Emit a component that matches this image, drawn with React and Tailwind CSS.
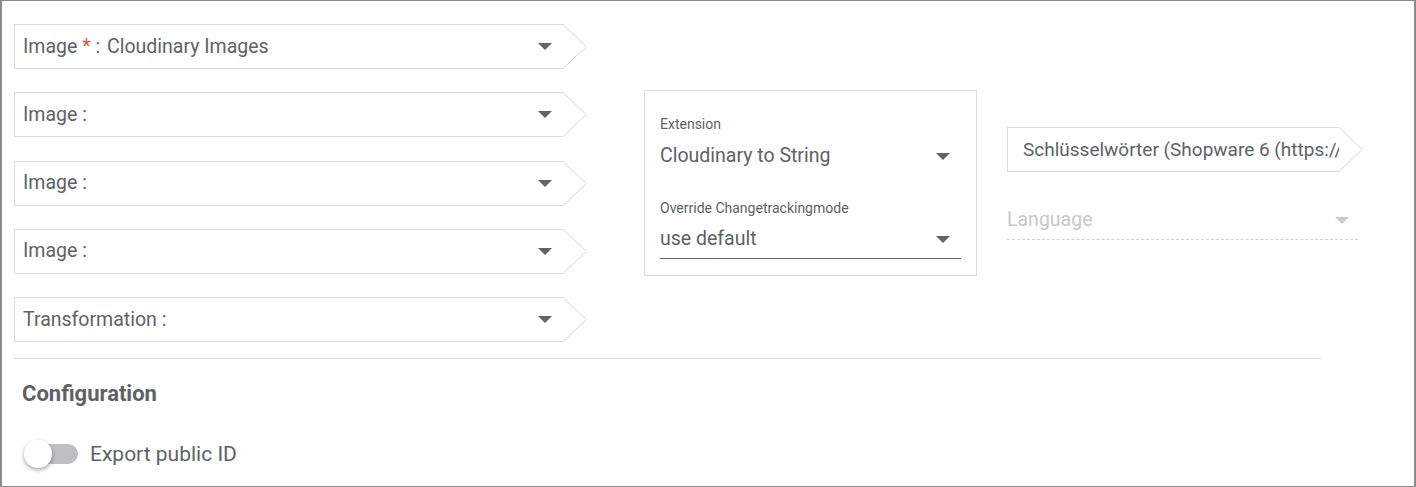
import React from "react";

// Small dropdown caret
const Caret = ({ light = false }) => (
  <svg width="14" height="7" viewBox="0 0 14 7" className="shrink-0">
    <polygon points="0,0 14,0 7,7" fill={light ? "#c9cccd" : "#5f6566"} />
  </svg>
);

// Arrow-shaped field used for the mapping rows
const ArrowField = ({
  children,
  width = "w-[573px]",
  caret = true,
  pad = "pl-[8px] pr-[11px]",
  text = "text-[19.5px]",
}) => (
  <div className={`flex h-[45px] shrink-0 ${width}`}>
    <div
      className={`flex min-w-0 flex-1 items-center overflow-hidden border-y border-l border-[#dcdcdc] ${pad}`}
    >
      <div className={`min-w-0 flex-1 overflow-hidden whitespace-nowrap leading-6 ${text}`}>
        {children}
      </div>
      {caret && <Caret />}
    </div>
    <svg width="24" height="45" viewBox="0 0 24 45" className="shrink-0">
      <path d="M0 0.5 L23.3 22.5 L0 44.5" fill="white" stroke="#d6d6d6" strokeWidth="1" />
    </svg>
  </div>
);

const rows = [
  { label: "Image", required: true, value: "Cloudinary Images" },
  { label: "Image" },
  { label: "Image" },
  { label: "Image" },
  { label: "Transformation" },
];

export default function App() {
  return (
    <div className="h-[487px] w-[1416px] overflow-hidden border-x-2 border-y border-[#8a8a8a] bg-white font-['Roboto',sans-serif] text-[#5c6366]">
      <div className="flex pl-[12px] pt-[23px]">
        {/* mapping rows */}
        <div className="flex w-[573px] flex-col gap-[23.25px]">
          {rows.map((r, i) => (
            <ArrowField key={i}>
              {r.label}
              {r.required && (
                <>
                  {" "}
                  <span className="text-[#e0533f]">*</span>
                </>
              )}
              {" : "}
              {r.value && <span className="ml-[2px]">{r.value}</span>}
            </ArrowField>
          ))}
        </div>

        {/* extension box */}
        <div className="ml-[57px] mt-[66px] h-[186px] w-[333px] shrink-0 border border-[#dcdcdc] px-[15px] pt-[25px]">
          <div className="text-[14px] leading-4">Extension</div>
          <div className="mt-[12px] flex items-center justify-between pr-[11px]">
            <span className="text-[19.5px] leading-6">Cloudinary to String</span>
            <Caret />
          </div>
          <div className="mt-[32px] text-[14px] leading-4">Override Changetrackingmode</div>
          <div className="mt-[11px] flex items-center justify-between border-b border-[#5f6566] pb-[7px] pr-[11px]">
            <span className="text-[19.5px] leading-6">use default</span>
            <Caret />
          </div>
        </div>

        {/* keyword + language */}
        <div className="ml-[30px] mt-[103px] flex w-[356px] flex-col">
          <ArrowField width="w-[356px]" caret={false} pad="pl-[15px] pr-0" text="text-[19px]">
            Schlüsselwörter (Shopware 6 (https://
          </ArrowField>
          <div className="mt-[36px] flex w-[351px] items-center justify-between border-b border-dashed border-[#cfd2d3] pb-[7px] pr-[9px]">
            <span className="text-[19.5px] leading-6 text-[#c5c9ca]">Language</span>
            <Caret light />
          </div>
        </div>
      </div>

      <div className="ml-[12px] mt-[16px] h-px w-[1307px] bg-[#dcdcdc]" />

      <div className="pl-[20px] pt-[21px] text-[22px] font-bold leading-7">Configuration</div>

      <div className="mt-[32px] flex items-center pl-[22px]">
        <div className="relative h-[28px] w-[56px] shrink-0">
          <div className="absolute left-[8px] top-[4px] h-[20px] w-[46px] rounded-full bg-[#bcc0c1]" />
          <div className="absolute left-0 top-0 size-[28px] rounded-full bg-white shadow-[0_2px_4px_rgba(0,0,0,0.35)]" />
        </div>
        <span className="ml-[10px] text-[21px] leading-6">Export public ID</span>
      </div>
    </div>
  );
}
